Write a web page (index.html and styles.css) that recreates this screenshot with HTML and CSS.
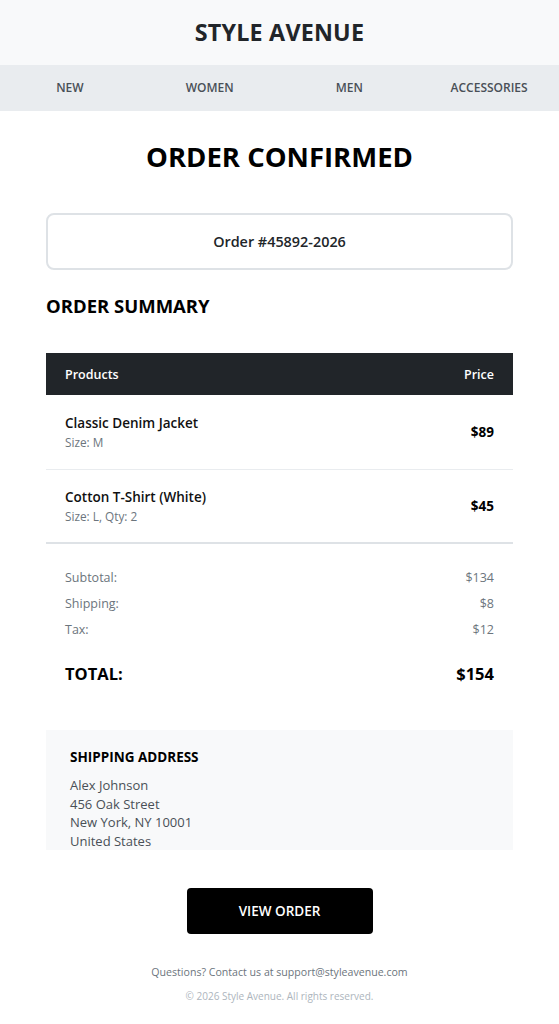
FILE: index.html
```html
<!DOCTYPE html>
<html>
<head>
<meta charset="utf-8">
<link rel="stylesheet" href="styles.css">
</head>
<body>
<header class="brand">STYLE AVENUE</header>
<nav class="nav">
  <span>NEW</span>
  <span>WOMEN</span>
  <span>MEN</span>
  <span>ACCESSORIES</span>
</nav>
<main class="content">
  <h1 class="title">ORDER CONFIRMED</h1>
  <div class="order-box">Order #45892-2026</div>
  <h2 class="section-title">ORDER SUMMARY</h2>
  <div class="table">
    <div class="thead"><span>Products</span><span>Price</span></div>
    <div class="row">
      <div class="item"><div class="name">Classic Denim Jacket</div><div class="meta">Size: M</div></div>
      <div class="price">$89</div>
    </div>
    <div class="row last">
      <div class="item"><div class="name">Cotton T-Shirt (White)</div><div class="meta">Size: L, Qty: 2</div></div>
      <div class="price">$45</div>
    </div>
  </div>
  <div class="totals">
    <div class="line"><span>Subtotal:</span><span>$134</span></div>
    <div class="line"><span>Shipping:</span><span>$8</span></div>
    <div class="line"><span>Tax:</span><span>$12</span></div>
    <div class="grand"><span>TOTAL:</span><span>$154</span></div>
  </div>
  <div class="address">
    <h3>SHIPPING ADDRESS</h3>
    <p>Alex Johnson<br>456 Oak Street<br>New York, NY 10001<br>United States</p>
  </div>
  <div class="cta"><a class="button">VIEW ORDER</a></div>
  <footer class="footer">
    <p class="contact">Questions? Contact us at support@styleavenue.com</p>
    <p class="copy">© 2026 Style Avenue. All rights reserved.</p>
  </footer>
</main>
</body>
</html>
```
FILE: styles.css
```css
* { box-sizing: border-box; }
body {
  margin: 0;
  font-family: "Open Sans", "Noto Sans", sans-serif;
  color: #000;
  background: #fff;
}
.brand {
  height: 65px;
  background: #f8f9fa;
  display: flex;
  align-items: center;
  justify-content: center;
  padding-bottom: 2px;
  font-size: 23.3px;
  font-weight: 700;
  color: #212529;
  letter-spacing: 0.2px;
}
.nav {
  height: 46px;
  background: #e9ecef;
  display: grid;
  grid-template-columns: repeat(4, 1fr);
  align-items: center;
  text-align: center;
  padding-bottom: 1px;
  font-size: 12px;
  font-weight: 600;
  color: #495057;
}
.content {
  padding: 0 46px;
}
.title {
  margin: 0;
  padding-top: 30px;
  height: 102px;
  text-align: center;
  font-size: 27.5px;
  font-weight: 700;
  line-height: 32px;
}
.order-box {
  height: 57px;
  border: 2px solid #dee2e6;
  border-radius: 8px;
  display: flex;
  align-items: center;
  justify-content: center;
  font-size: 14.4px;
  font-weight: 600;
  color: #212529;
}
.section-title {
  margin: 0;
  padding-top: 23px;
  height: 83px;
  font-size: 18.5px;
  font-weight: 700;
  line-height: 26px;
}
.thead {
  height: 42px;
  background: #212529;
  color: #fff;
  display: flex;
  justify-content: space-between;
  align-items: center;
  padding: 0 19px;
  font-size: 12.5px;
  font-weight: 600;
}
.row {
  height: 75px;
  display: flex;
  justify-content: space-between;
  align-items: center;
  padding: 0 19px;
  border-bottom: 1px solid #e9ecef;
}
.row.last {
  height: 74px;
  border-bottom: 2px solid #dee2e6;
}
.item { padding-top: 1px; }
.name {
  font-size: 13.5px;
  font-weight: 600;
  line-height: 19px;
  color: #111;
}
.meta {
  font-size: 11.8px;
  color: #6c757d;
  line-height: 18px;
}
.price {
  font-size: 13.5px;
  font-weight: 700;
}
.totals {
  padding: 21px 19px 0;
  height: 186px;
}
.line {
  display: flex;
  justify-content: space-between;
  font-size: 12.5px;
  color: #6c757d;
  line-height: 26px;
}
.grand {
  display: flex;
  justify-content: space-between;
  margin-top: 20px;
  font-size: 16.5px;
  font-weight: 700;
  line-height: 22px;
}
.address {
  background: #f8f9fa;
  padding: 17px 24px 0;
  height: 120px;
  overflow: hidden;
}
.address h3 {
  margin: 0 0 9px;
  font-size: 13.5px;
  font-weight: 700;
  line-height: 20px;
}
.address p {
  margin: 0;
  font-size: 13px;
  line-height: 18.7px;
  color: #495057;
}
.cta {
  display: flex;
  justify-content: center;
  padding-top: 38px;
}
.button {
  width: 186px;
  height: 46px;
  background: #000;
  color: #fff;
  border-radius: 4px;
  display: flex;
  align-items: center;
  justify-content: center;
  font-size: 13.5px;
  font-weight: 600;
}
.footer {
  text-align: center;
  padding-top: 30px;
}
.footer p { margin: 0; }
.contact {
  font-size: 10.6px;
  color: #6c757d;
  line-height: 16px;
}
.copy {
  margin-top: 8px !important;
  font-size: 10px;
  color: #adb5bd;
  line-height: 16px;
}
```
